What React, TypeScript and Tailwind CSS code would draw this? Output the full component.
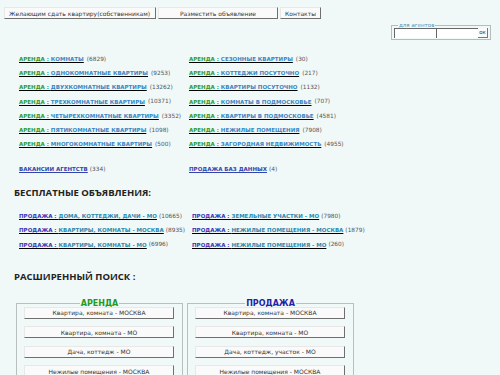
const rent: [string, string, string, string][] = [
  ['КОМНАТЫ', '6829', 'СЕЗОННЫЕ КВАРТИРЫ', '30'],
  ['ОДНОКОМНАТНЫЕ КВАРТИРЫ', '9253', 'КОТТЕДЖИ ПОСУТОЧНО', '217'],
  ['ДВУХКОМНАТНЫЕ КВАРТИРЫ', '13262', 'КВАРТИРЫ ПОСУТОЧНО', '1132'],
  ['ТРЕХКОМНАТНЫЕ КВАРТИРЫ', '10371', 'КОМНАТЫ В ПОДМОСКОВЬЕ', '707'],
  ['ЧЕТЫРЕХКОМНАТНЫЕ КВАРТИРЫ', '3352', 'КВАРТИРЫ В ПОДМОСКОВЬЕ', '4581'],
  ['ПЯТИКОМНАТНЫЕ КВАРТИРЫ', '1098', 'НЕЖИЛЫЕ ПОМЕЩЕНИЯ', '7908'],
  ['МНОГОКОМНАТНЫЕ КВАРТИРЫ', '500', 'ЗАГОРОДНАЯ НЕДВИЖИМОСТЬ', '4955'],
]

const sale: [string, string, string, string][] = [
  ['ДОМА, КОТТЕДЖИ, ДАЧИ - МО', '10665', 'ЗЕМЕЛЬНЫЕ УЧАСТКИ - МО', '7980'],
  ['КВАРТИРЫ, КОМНАТЫ - МОСКВА', '8935', 'НЕЖИЛЫЕ ПОМЕЩЕНИЯ - МОСКВА', '1879'],
  ['КВАРТИРЫ, КОМНАТЫ - МО', '6996', 'НЕЖИЛЫЕ ПОМЕЩЕНИЯ - МО', '260'],
]

const btn =
  'h-[12px] flex items-center whitespace-nowrap overflow-hidden bg-[#fafafa] border-t border-l border-t-[#e8e8e8] border-l-[#e8e8e8] border-b border-r border-b-[#6f6f6f] border-r-[#6f6f6f] text-[6px] text-[#333]'

function RentLink({ name, count }: { name: string; count: string }) {
  return (
    <div className="h-[14.2px] flex items-center whitespace-nowrap">
      <span className="font-bold underline text-[5.5px]">
        <span className="text-[#2f9a36]">АРЕНДА : </span>
        <span className="text-[#3a86c2]">{name}</span>
      </span>
      <span className="text-[5.8px] text-[#555] ml-[3px]">({count})</span>
    </div>
  )
}

function SaleLink({ name, count }: { name: string; count: string }) {
  return (
    <div className="h-[14.2px] flex items-center whitespace-nowrap">
      <span className="font-bold underline text-[5.5px]">
        <span className="text-[#3636b4]">ПРОДАЖА : </span>
        <span className="text-[#2e88ad]">{name}</span>
      </span>
      <span className="text-[5.8px] text-[#555] ml-[2px]">({count})</span>
    </div>
  )
}

function SearchBox({ title, color, items }: { title: string; color: string; items: string[] }) {
  return (
    <fieldset className="w-[167px] border border-[#b9bfbf] px-[7px] pb-[4px]">
      <legend className={`mx-auto px-[1px] text-[8px] font-bold leading-[6px] ${color}`}>{title}</legend>
      <div className="flex flex-col gap-[7.5px]">
        {items.map((t) => (
          <div key={t} className={`${btn} w-[150px] justify-center`}>
            {t}
          </div>
        ))}
      </div>
    </fieldset>
  )
}

export default function App() {
  return (
    <div className="w-[500px] h-[375px] overflow-hidden bg-[#f0f8f8] font-['DejaVu_Sans',sans-serif]">
      <div className="flex pt-[7px] pl-[4px]">
        <div className={`${btn} w-[152px] pl-[4px]`}>Желающим сдать квартиру(собственникам)</div>
        <div className={`${btn} w-[120px] ml-[2px] justify-center`}>Разместить объявление</div>
        <div className={`${btn} w-[41px] ml-[2px] justify-center`}>Контакты</div>
      </div>

      <div className="flex justify-end pr-[9px] mt-[3px]">
        <fieldset className="w-[97px] border border-[#b5bcbc] px-[2px] pb-[1px]">
          <legend className="ml-[4px] px-[1px] text-[5.5px] text-[#5a8fb0] leading-[6px]">для агентов</legend>
          <div className="flex items-center">
            <div className="w-[42px] h-[10px] bg-white border-t border-l border-[#666] border-b-[#ddd] border-r-[#ddd]" />
            <div className="w-[42px] h-[10px] bg-white border-t border-l border-[#666] border-b-[#ddd] border-r-[#ddd]" />
            <div className="w-[10px] h-[10px] flex items-center justify-center bg-[#fafafa] border-r border-b border-[#777] text-[5.5px] text-[#333]">
              ок
            </div>
          </div>
        </fieldset>
      </div>

      <div className="pl-[19px] mt-[12px]">
        {rent.map((r) => (
          <div key={r[0]} className="grid grid-cols-[170px_1fr]">
            <RentLink name={r[0]} count={r[1]} />
            <RentLink name={r[2]} count={r[3]} />
          </div>
        ))}
        <div className="grid grid-cols-[170px_1fr] mt-[3px] h-[14px] items-center whitespace-nowrap">
          <div>
            <span className="font-bold underline text-[5.5px] text-[#3444ad]">ВАКАНСИИ АГЕНТСТВ</span>
            <span className="text-[5.8px] text-[#555] ml-[2px]">(334)</span>
          </div>
          <div>
            <span className="font-bold underline text-[5.5px] text-[#3444ad]">ПРОДАЖА БАЗ ДАННЫХ</span>
            <span className="text-[5.8px] text-[#555] ml-[2px]">(4)</span>
          </div>
        </div>
      </div>

      <div className="pl-[14px] mt-[18px] h-[14px] flex items-center font-['Open_Sans',sans-serif] font-bold text-[9.5px] text-[#222]">
        БЕСПЛАТНЫЕ ОБЪЯВЛЕНИЯ:
      </div>

      <div className="pl-[19px] mt-[9px]">
        {sale.map((r) => (
          <div key={r[0]} className="grid grid-cols-[173px_1fr]">
            <SaleLink name={r[0]} count={r[1]} />
            <SaleLink name={r[2]} count={r[3]} />
          </div>
        ))}
      </div>

      <div className="pl-[14px] mt-[18px] h-[14px] flex items-center font-['Open_Sans',sans-serif] font-bold text-[9.5px] text-[#222]">
        РАСШИРЕННЫЙ ПОИСК :
      </div>

      <div className="flex gap-[4px] pl-[16px] mt-[17px]">
        <SearchBox
          title="АРЕНДА"
          color="text-[#239a23]"
          items={['Квартира, комната - МОСКВА', 'Квартира, комната - МО', 'Дача, коттедж - МО', 'Нежилые помещения - МОСКВА']}
        />
        <SearchBox
          title="ПРОДАЖА"
          color="text-[#1f22a8]"
          items={['Квартира, комната - МОСКВА', 'Квартира, комната - МО', 'Дача, коттедж, участок - МО', 'Нежилые помещения - МОСКВА']}
        />
      </div>
    </div>
  )
}
